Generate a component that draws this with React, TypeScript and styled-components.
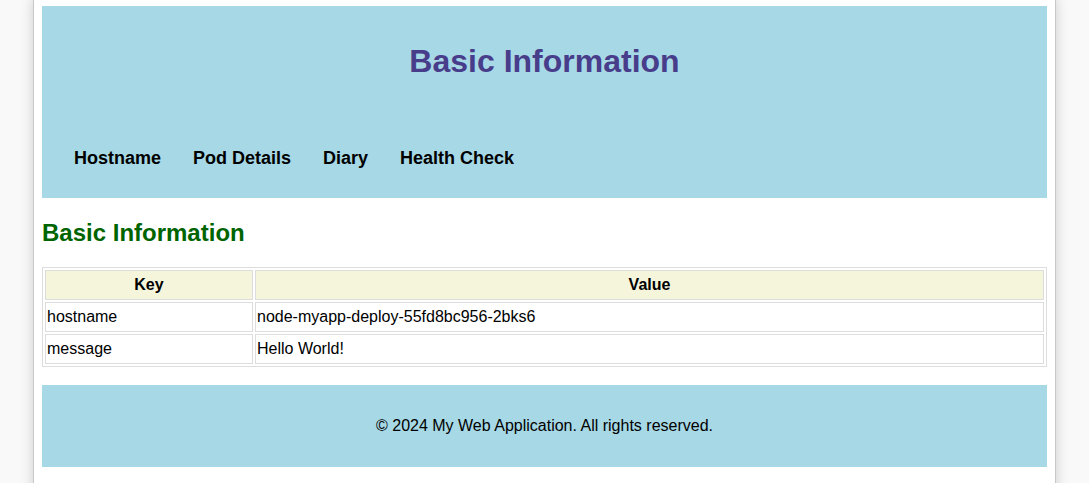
import React from "react";
import styled, { createGlobalStyle } from "styled-components";

const GlobalStyle = createGlobalStyle`
  html, body {
    margin: 0;
    padding: 0;
    background: #f9f9f9;
    font-family: "Liberation Sans", Arial, sans-serif;
    color: #000;
  }
`;

const Container = styled.div`
  width: 1005px;
  min-height: 100vh;
  margin: -2px auto 0;
  padding: 8px 8px 16px;
  background: #fff;
  box-shadow: 0 0 12px rgba(0, 0, 0, 0.18);
  border-left: 1px solid #c8c8c8;
  border-right: 1px solid #c8c8c8;
  box-sizing: content-box;
`;

const Header = styled.header`
  background: #a7d8e5;
  padding: 16px 0;
`;

const Title = styled.h1`
  margin: 21px 0;
  text-align: center;
  color: #483d8b;
  font-size: 32px;
  font-weight: bold;
`;

const Nav = styled.nav`
  padding: 47px 0 13px;
`;

const NavList = styled.ul`
  list-style: none;
  margin: 0;
  padding: 0 0 0 32px;
  display: flex;
  gap: 32px;
`;

const NavItem = styled.li`
  font-size: 18px;
  font-weight: bold;
  color: #000;
`;

const SectionTitle = styled.h2`
  margin: 21px 0 20px;
  color: #006400;
  font-size: 24px;
  font-weight: bold;
`;

const Table = styled.table`
  width: 100%;
  border: 1px solid #ddd;
  border-spacing: 2px;
  font-size: 16px;
`;

const HeadCell = styled.th<{ $narrow?: boolean }>`
  border: 1px solid #ddd;
  background: #f5f5dc;
  padding: 5px 1px;
  text-align: center;
  font-weight: bold;
  box-sizing: border-box;
  width: ${(p) => (p.$narrow ? "208px" : "auto")};
`;

const Cell = styled.td`
  border: 1px solid #ddd;
  padding: 5px 1px;
  text-align: left;
`;

const Footer = styled.footer`
  margin-top: 18px;
  background: #a7d8e5;
  padding: 32px 0;
  text-align: center;
  font-size: 16px;
`;

const rows: [string, string][] = [
  ["hostname", "node-myapp-deploy-55fd8bc956-2bks6"],
  ["message", "Hello World!"],
];

export default function App() {
  return (
    <>
      <GlobalStyle />
      <Container>
        <Header>
          <Title>Basic Information</Title>
          <Nav>
            <NavList>
              <NavItem>Hostname</NavItem>
              <NavItem>Pod Details</NavItem>
              <NavItem>Diary</NavItem>
              <NavItem>Health Check</NavItem>
            </NavList>
          </Nav>
        </Header>
        <SectionTitle>Basic Information</SectionTitle>
        <Table>
          <thead>
            <tr>
              <HeadCell $narrow>Key</HeadCell>
              <HeadCell>Value</HeadCell>
            </tr>
          </thead>
          <tbody>
            {rows.map(([k, v]) => (
              <tr key={k}>
                <Cell>{k}</Cell>
                <Cell>{v}</Cell>
              </tr>
            ))}
          </tbody>
        </Table>
        <Footer>© 2024 My Web Application. All rights reserved.</Footer>
      </Container>
    </>
  );
}
